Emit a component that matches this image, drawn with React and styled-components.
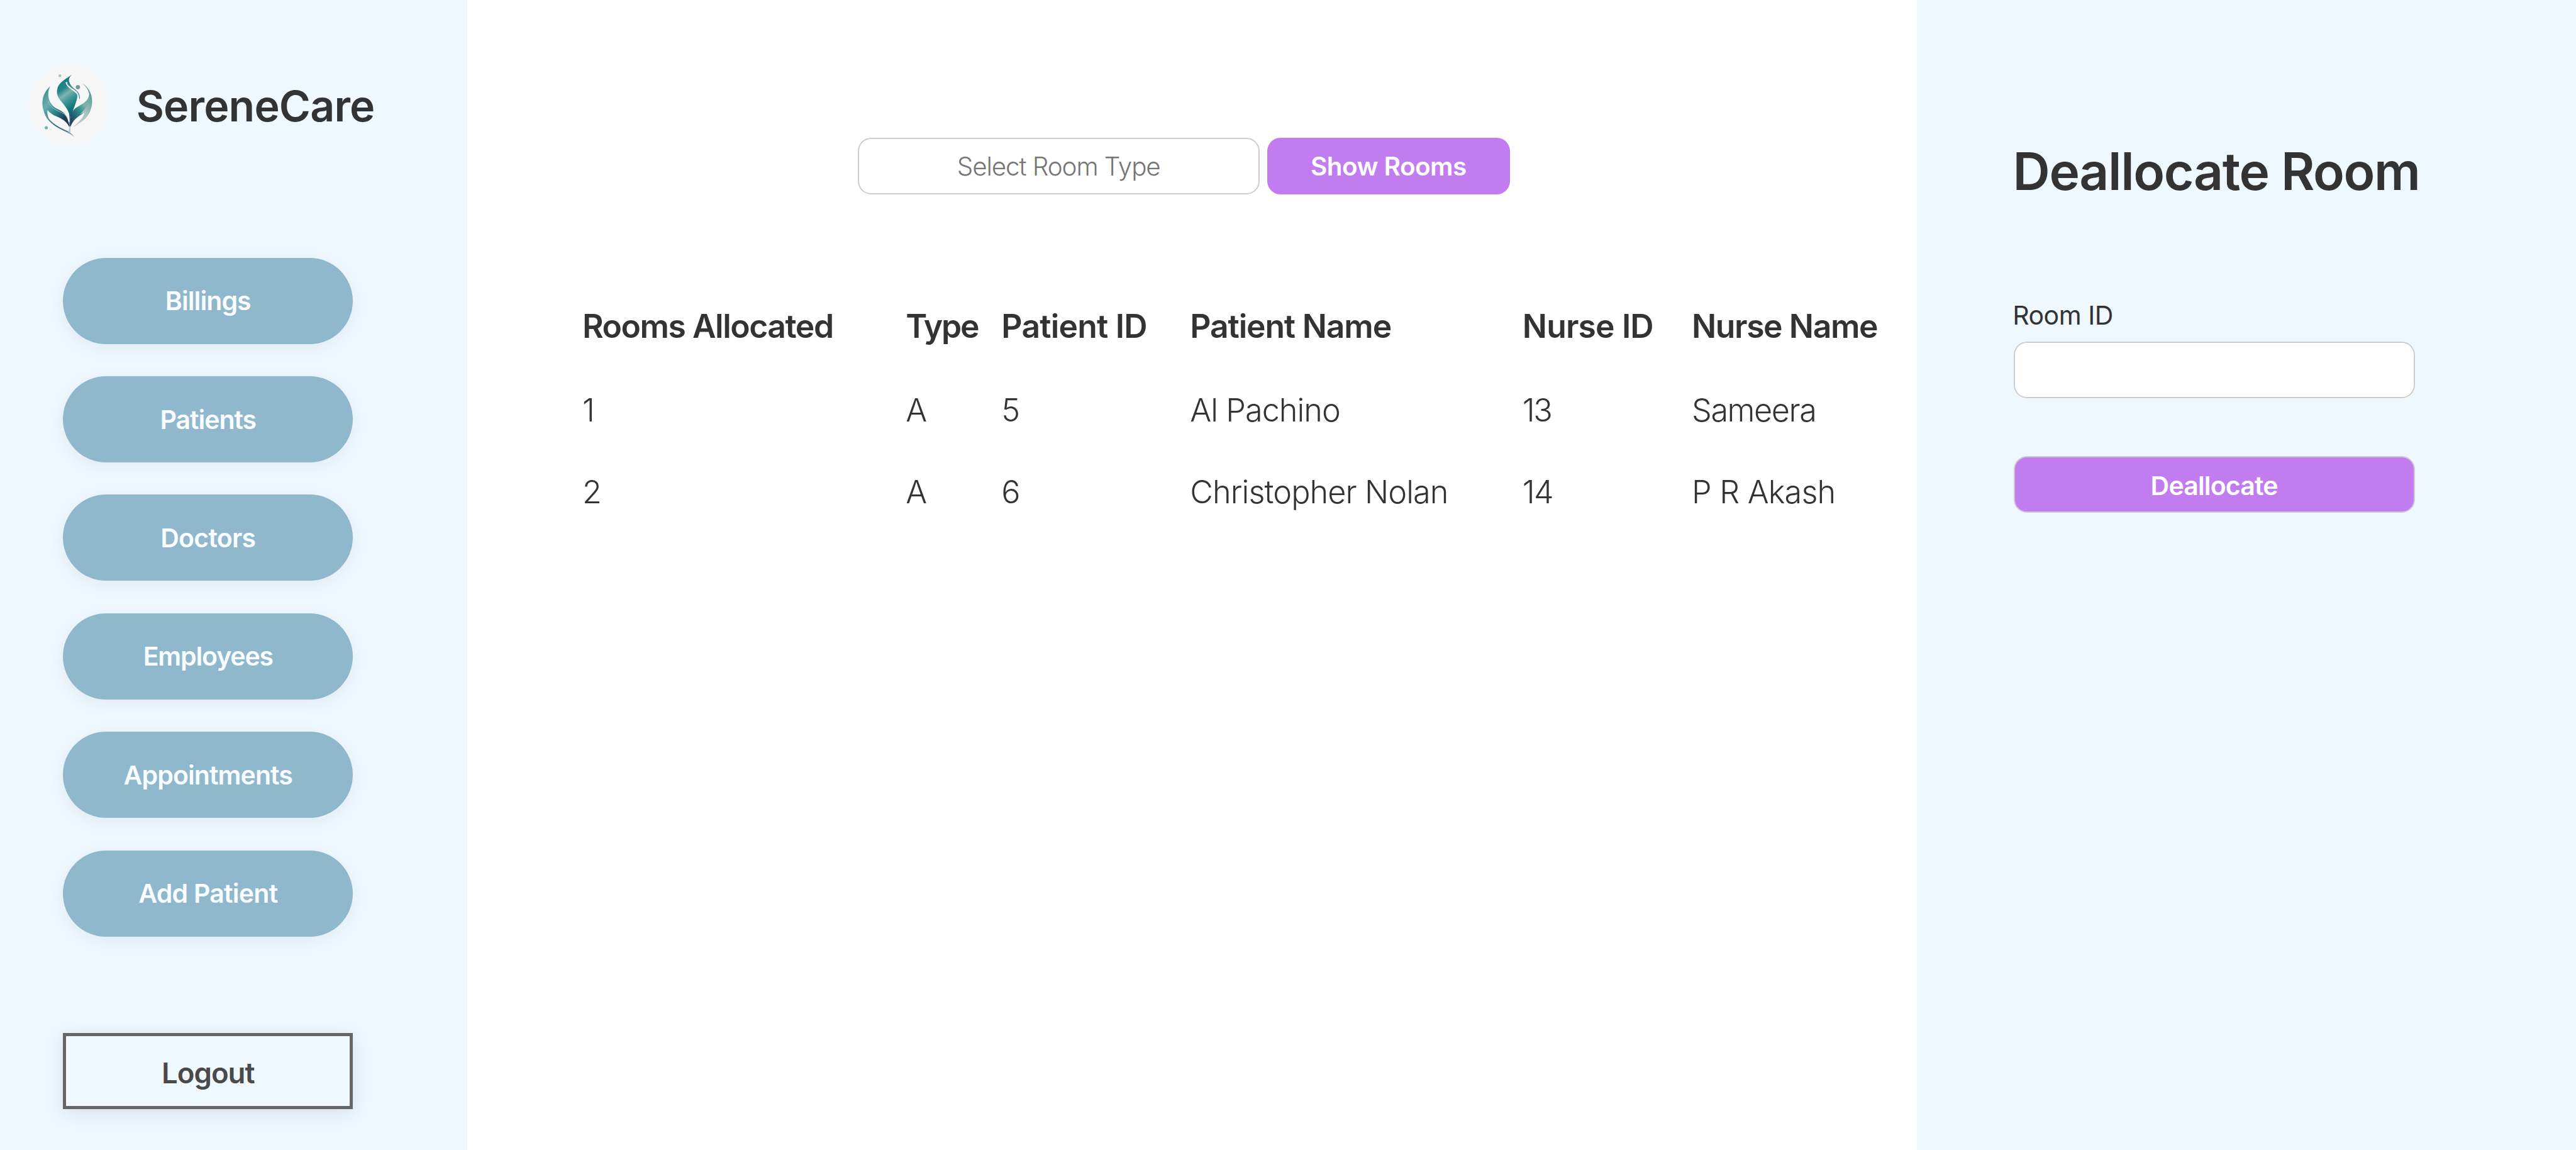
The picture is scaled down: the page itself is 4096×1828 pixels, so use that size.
import React from 'react';
import styled, { createGlobalStyle } from 'styled-components';

const GlobalStyle = createGlobalStyle`
  * { box-sizing: border-box; }
  body {
    margin: 0;
    background: #fff;
    color: #333;
    font-family: Inter, "Liberation Sans", sans-serif;
  }
`;

const Page = styled.div`
  display: grid;
  grid-template-columns: 743.3px 2304.4px 1fr;
  height: 100vh;
  overflow: hidden;
`;

const Sidebar = styled.aside`
  display: flex;
  flex-direction: column;
  padding: 101.7px 0 0 100.2px;
  background: #eff7ff;
`;

const Brand = styled.header`
  display: flex;
  align-items: center;
  gap: 44px;
  height: 130.5px;
  margin-left: -55.2px;
`;

const LogoMark = styled.svg`
  display: block;
  width: 127.7px;
  height: 130.5px;
`;

const BrandName = styled.h1`
  margin: 0;
  padding-top: 2px;
  font-size: 68px;
  font-weight: 600;
  line-height: 82px;
  letter-spacing: -0.0118em;
`;

const Nav = styled.nav`
  display: flex;
  flex-direction: column;
  gap: 51.3px;
  margin: 177.4px 0 153.4px;
`;

const NavButton = styled.button`
  width: 461.2px;
  height: 137.1px;
  padding: 0;
  border: 0;
  border-radius: 68.5px;
  background: #8fb8cd;
  box-shadow: 0 6px 27px rgba(0, 0, 0, 0.06);
  color: #fafdff;
  font: 600 41px Inter, "Liberation Sans", sans-serif;
  letter-spacing: ${(p) => p.$tracking}em;
`;

const LogoutButton = styled.button`
  width: 461.2px;
  height: 121.3px;
  padding: 5px 0 0;
  border: 5px solid #666;
  background: #eff7ff;
  box-shadow: 0 6px 27px rgba(0, 0, 0, 0.1);
  color: #4a4a4a;
  font: 600 45.5px Inter, "Liberation Sans", sans-serif;
  letter-spacing: -0.0225em;
`;

const Main = styled.main`
  display: flex;
  flex-direction: column;
  padding-top: 218.7px;
`;

const FilterBar = styled.div`
  display: flex;
  gap: 12.3px;
  margin-left: 620.4px;
`;

const TextField = styled.input`
  width: ${(p) => p.$width}px;
  height: ${(p) => p.$height}px;
  padding: 0;
  border: 2px solid #cdcdcd;
  border-radius: 21px;
  background: #fff;
  text-align: center;
  font: 300 40.3px Inter, "Liberation Sans", sans-serif;
  letter-spacing: -0.0264em;
  &::placeholder { color: #757575; opacity: 1; }
`;

const ActionButton = styled.button`
  width: ${(p) => p.$width}px;
  height: ${(p) => p.$height}px;
  padding: ${(p) => (p.$outlined ? '4px 0 0' : '0')};
  border: ${(p) => (p.$outlined ? '2px solid #cfc9d2' : '0')};
  border-radius: 21px;
  background: #c17cf0;
  color: #fff;
  font: 600 ${(p) => (p.$outlined ? 41 : 40.5)}px Inter, "Liberation Sans", sans-serif;
  letter-spacing: ${(p) => (p.$outlined ? -0.0204 : -0.014)}em;
`;

const RoomsTable = styled.div`
  display: grid;
  grid-template-columns: 514.2px 152.2px 300px 528.5px 269.2px 1fr;
  grid-template-rows: 137px 130.2px 130.2px;
  align-items: center;
  margin: 139.9px 0 0 182.7px;
  white-space: nowrap;
`;

const HeadCell = styled.div`
  font-size: 51.6px;
  font-weight: 600;
  letter-spacing: ${(p) => p.$tracking}em;
`;

const Cell = styled.div`
  font-size: 50.3px;
  font-weight: 300;
  letter-spacing: ${(p) => p.$tracking}em;
`;

const Panel = styled.section`
  display: flex;
  flex-direction: column;
  align-items: flex-start;
  padding: 223px 0 0 153.9px;
  background: #eff7ff;
`;

const PanelTitle = styled.h2`
  margin: 0 0 153.4px -1px;
  font-size: 82px;
  font-weight: 600;
  line-height: 100px;
  letter-spacing: -0.0167em;
  white-space: nowrap;
`;

const FieldLabel = styled.label`
  margin: 0 0 16.2px -1.4px;
  font-size: 41px;
  line-height: 50px;
  letter-spacing: -0.0114em;
`;

const FieldSlot = styled.div`
  display: flex;
  margin-bottom: 92.1px;
`;

const NAV_ITEMS = [
  ['Billings', -0.0222],
  ['Patients', -0.025],
  ['Doctors', -0.018],
  ['Employees', -0.028],
  ['Appointments', -0.022],
  ['Add Patient', -0.018],
];

const COLUMNS = [
  ['Rooms Allocated', -0.0278],
  ['Type', -0.042],
  ['Patient ID', -0.0145],
  ['Patient Name', -0.0218],
  ['Nurse ID', -0.0163],
  ['Nurse Name', -0.0268],
];

const ROWS = [
  [['1', 0], ['A', 0], ['5', 0], ['Al Pachino', -0.0185], ['13', -0.049], ['Sameera', -0.0284]],
  [['2', 0], ['A', 0], ['6', 0], ['Christopher Nolan', -0.0175], ['14', -0.035], ['P R Akash', -0.0155]],
];

function Logo() {
  return (
    <LogoMark viewBox="38 57 450 460" preserveAspectRatio="none" aria-hidden="true">
      <defs>
        <linearGradient id="flame" x1="0.3" y1="0" x2="0.65" y2="1">
          <stop offset="0" stopColor="#0f7a7c" />
          <stop offset="0.3" stopColor="#248688" />
          <stop offset="0.46" stopColor="#7db4b2" />
          <stop offset="0.62" stopColor="#3f9796" />
          <stop offset="0.85" stopColor="#0e7477" />
          <stop offset="1" stopColor="#1b5a6c" />
        </linearGradient>
        <linearGradient id="leftLeaf" x1="0" y1="0" x2="0.85" y2="1">
          <stop offset="0" stopColor="#2e8587" />
          <stop offset="0.35" stopColor="#6aaeaf" />
          <stop offset="0.62" stopColor="#2b7f88" />
          <stop offset="0.85" stopColor="#20425b" />
          <stop offset="1" stopColor="#1c3550" />
        </linearGradient>
        <linearGradient id="rightLeaf" x1="1" y1="0" x2="0" y2="1">
          <stop offset="0" stopColor="#6fa9a8" />
          <stop offset="0.3" stopColor="#7fb1ad" />
          <stop offset="0.52" stopColor="#2b8d8e" />
          <stop offset="0.78" stopColor="#25566b" />
          <stop offset="1" stopColor="#1b3049" />
        </linearGradient>
        <linearGradient id="rightEdge" x1="0.8" y1="0" x2="0.2" y2="1">
          <stop offset="0" stopColor="#3b9291" />
          <stop offset="0.55" stopColor="#a9c2bd" />
          <stop offset="1" stopColor="#c3cbc8" />
        </linearGradient>
        <linearGradient id="stem" x1="0" y1="0" x2="1" y2="1">
          <stop offset="0" stopColor="#5aa2a5" />
          <stop offset="0.55" stopColor="#3a6b7b" />
          <stop offset="1" stopColor="#50707f" />
        </linearGradient>
      </defs>
      <ellipse cx="263" cy="287" rx="225" ry="230" fill="#f6f6f6" />
      {/* cupped leaves */}
      <path d="M162 180 C113 218 105 290 134 340 C139 352 147 362 156 371 C147 350 142 328 146 314 C158 330 176 341 196 350 C228 364 253 378 268 410 C267 364 246 328 207 311 C173 296 151 267 150 228 C149 208 154 194 162 180 Z" fill="url(#leftLeaf)" />
      <path d="M149 265 C163 300 184 310 213 323 C239 334 254 347 261 369" fill="none" stroke="#a5cdd0" strokeWidth="3" />
      <path d="M130 325 C142 373 190 409 264 438" fill="none" stroke="url(#stem)" strokeWidth="7" />
      <path d="M258 432 C274 440 285 449 295 464 C285 455 272 446 256 440 Z" fill="#7b95a2" />
      <path d="M379 225 C376 267 335 281 302 304 C274 325 269 362 273 411 C286 375 303 361 326 345 C350 334 378 300 384 262 Z" fill="url(#rightLeaf)" />
      <path d="M341 164 C395 199 411 270 381 329 C360 369 326 385 288 412 C313 386 340 365 351 337 C354 326 342 329 326 341 C353 312 384 279 380 231 C378 205 363 184 341 164 Z" fill="url(#rightEdge)" />
      {/* flame */}
      <path d="M282 115 C268 130 262 141 269 160 C276 181 303 196 311 218 C317 240 307 266 300 286 C291 309 283 326 279 350 L270 350 C267 322 246 293 224 268 C203 244 193 218 202 190 C211 158 247 141 282 115 Z" fill="url(#flame)" />
      <path d="M251 158 C257 182 277 191 297 206 C313 218 322 232 325 249" fill="none" stroke="#f6f6f6" strokeWidth="9" />
      <path d="M257 164 C266 184 290 191 308 207 C321 219 325 232 325 248" fill="none" stroke="#357f89" strokeWidth="4" strokeLinecap="round" />
      <path d="M268 340 L281 340 L273 420 L267 412 Z" fill="#275068" opacity="0.75" />
      <path d="M238 300 C254 320 264 346 266 380" fill="none" stroke="#f6f6f6" strokeWidth="8" />
      <path d="M268 405 L276 405 L274 443 L263 434 Z" fill="#bdcdd2" />
      {/* sparks */}
      <circle cx="316" cy="186" r="12" fill="#719b98" />
      <rect x="208" y="114" width="14" height="15" rx="4" fill="#a9bfd0" />
      <circle cx="139" cy="413" r="9" fill="#72b0b1" />
      <circle cx="164" cy="424" r="4" fill="#dbe8e9" />
    </LogoMark>
  );
}

export default function App() {
  return (
    <>
      <GlobalStyle />
      <Page>
        <Sidebar>
          <Brand>
            <Logo />
            <BrandName>SereneCare</BrandName>
          </Brand>
          <Nav>
            {NAV_ITEMS.map(([label, tracking]) => (
              <NavButton key={label} $tracking={tracking}>{label}</NavButton>
            ))}
          </Nav>
          <LogoutButton>Logout</LogoutButton>
        </Sidebar>

        <Main>
          <FilterBar>
            <TextField $width={639} $height={90.8} placeholder="Select Room Type" />
            <ActionButton $width={385.7} $height={90.8}>Show Rooms</ActionButton>
          </FilterBar>
          <RoomsTable>
            {COLUMNS.map(([label, tracking]) => (
              <HeadCell key={label} $tracking={tracking}>{label}</HeadCell>
            ))}
            {ROWS.map((row, r) =>
              row.map(([value, tracking], c) => (
                <Cell key={`${r}-${c}`} $tracking={tracking}>{value}</Cell>
              ))
            )}
          </RoomsTable>
        </Main>

        <Panel>
          <PanelTitle>Deallocate Room</PanelTitle>
          <FieldLabel htmlFor="room-id">Room ID</FieldLabel>
          <FieldSlot>
            <TextField id="room-id" $width={638.1} $height={90} />
          </FieldSlot>
          <ActionButton $width={638.1} $height={90} $outlined>Deallocate</ActionButton>
        </Panel>
      </Page>
    </>
  );
}
